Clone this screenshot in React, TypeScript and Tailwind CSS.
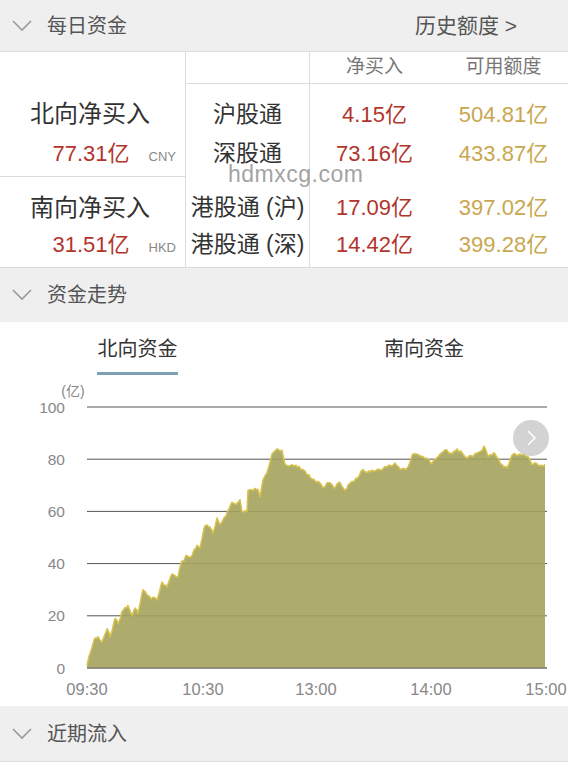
import React from 'react';

const FONT = '"Liberation Sans", "Noto Sans CJK SC", sans-serif';

// keypoints of the north-bound flow curve: [x px, value 亿]
const keys: [number, number][] = [
  [87, 1], [90, 5.4], [95, 11.5], [98, 12], [102, 10], [107, 15], [110, 12], [115, 19], [118, 17],
  [123, 22], [128, 24], [132, 20], [135, 23], [138, 21], [143, 30], [147, 28], [157, 26], [162, 33],
  [167, 31], [172, 36], [178, 35], [182, 41], [187, 43], [192, 43], [197, 47], [200, 46], [205, 54.5],
  [210, 54], [213, 51.5], [217, 57.5], [220, 55], [227, 59.5], [232, 63.5], [237, 63], [240, 64.5],
  [242, 60], [247, 60], [248, 68], [253, 68], [258, 68.5], [260, 65.5], [263, 72], [268, 76], [272, 82],
  [277, 84], [282, 83.5], [285, 78], [290, 77.5], [297, 77], [303, 76], [310, 73], [317, 71.5],
  [323, 69], [328, 71], [335, 69], [340, 71], [345, 68], [348, 70], [357, 72.5], [363, 76], [370, 75],
  [377, 76], [387, 77], [395, 78.5], [400, 76], [408, 77], [413, 82], [423, 81], [432, 78.5],
  [437, 80.5], [447, 83.5], [452, 82], [457, 84], [465, 81], [473, 81], [480, 83], [484, 85],
  [488, 81], [495, 82], [500, 78.5], [507, 76.5], [512, 81.5], [520, 82], [528, 81], [533, 78],
  [545, 78],
];

const yOf = (v: number) => 286 - v * 2.61;

function buildLine() {
  const pts: string[] = [];
  for (let i = 0; i < keys.length - 1; i++) {
    const [x0, v0] = keys[i];
    const [x1, v1] = keys[i + 1];
    for (let x = x0; x < x1; x += 2) {
      const t = (x - x0) / (x1 - x0);
      const r = Math.sin(x * 12.9898) * 43758.5453;
      const n = x === x0 ? 0 : (r - Math.floor(r) - 0.5) * 1.4;
      pts.push(`${x},${yOf(v0 + (v1 - v0) * t + n).toFixed(1)}`);
    }
  }
  const last = keys[keys.length - 1];
  pts.push(`${last[0]},${yOf(last[1]).toFixed(1)}`);
  return pts;
}

const Chevron = () => (
  <svg width="20" height="12" viewBox="0 0 20 12" className="shrink-0">
    <path d="M1 1 L10 10 L19 1" fill="none" stroke="#9a9a9a" strokeWidth="1.6" />
  </svg>
);

const SectionHeader = ({ title, right, h }: { title: string; right?: string; h: string }) => (
  <div className={`flex items-center justify-between bg-[#efefef] pl-[12px] pr-[51px] ${h}`}>
    <div className="flex items-center gap-[15px]">
      <Chevron />
      <span className="text-[20px] text-[#555]">{title}</span>
    </div>
    {right && <span className="text-[21px] text-[#555]">{right}</span>}
  </div>
);

const Chart = () => {
  const line = buildLine();
  const area = `M87,286 L${line.join(' L')} L545,286 Z`;
  const grid = [100, 80, 60, 40, 20, 0];
  const times: [string, number][] = [['09:30', 87], ['10:30', 203], ['13:00', 316], ['14:00', 431], ['15:00', 546]];
  return (
    <svg width="568" height="324" viewBox="0 0 568 324" style={{ fontFamily: FONT }}>
      <text x="73" y="14" fontSize="14" fill="#888" textAnchor="middle">(亿)</text>
      {grid.map((v) => (
        <g key={v}>
          <line x1="87" x2="547" y1={yOf(v)} y2={yOf(v)} stroke="#555" strokeWidth="1" />
          <text x="65" y={yOf(v) + 5.5} fontSize="15.5" fill="#888" textAnchor="end">{v}</text>
        </g>
      ))}
      <path d={area} fill="#a4a35d" fillOpacity="0.9" />
      <polyline points={line.join(' ')} fill="none" stroke="#d8c24c" strokeWidth="1.5" strokeLinejoin="round" />
      <line x1="87" x2="547" y1="286" y2="286" stroke="#777" strokeWidth="1" />
      {times.map(([t, x]) => (
        <text key={t} x={x} y="313" fontSize="16.5" fill="#888" textAnchor="middle">{t}</text>
      ))}
      <circle cx="531" cy="56" r="18" fill="#c8c8c8" fillOpacity="0.8" />
      <path d="M528 49 L535 56 L528 63" fill="none" stroke="#fff" strokeWidth="1.5" />
    </svg>
  );
};

const red = 'text-[#b2352c]';
const gold = 'text-[#c9a74f]';

export default function App() {
  return (
    <div className="relative w-[568px] h-[764px] overflow-hidden bg-white" style={{ fontFamily: FONT }}>
      <SectionHeader title="每日资金" right="历史额度 >" h="h-[51px]" />

      <div className="grid grid-cols-[186px_124px_129px_1fr] grid-rows-[32px_93px_90px] border-t border-b border-[#dcdcdc]">
        <div className="row-span-2 flex flex-col items-center pt-[42px] leading-[40px] border-r border-b border-[#dcdcdc]">
          <span className="text-[24px] text-[#333] pr-[5px]">北向净买入</span>
          <div className="self-end flex items-baseline gap-[19px] pr-[9px]">
            <span className={`text-[22px] ${red}`}>77.31亿</span>
            <span className="text-[13px] text-[#888]">CNY</span>
          </div>
        </div>
        <div className="border-r border-b border-[#dcdcdc]" />
        <div className="col-span-2 grid grid-cols-[129px_1fr] items-center border-b border-[#dcdcdc] text-[19px] text-[#777]">
          <span className="text-center">净买入</span>
          <span className="text-center">可用额度</span>
        </div>

        <div className="flex flex-col items-center pt-[11px] leading-[39px] border-r border-[#dcdcdc] text-[23px] text-[#333]">
          <span>沪股通</span>
          <span>深股通</span>
        </div>
        <div className={`flex flex-col items-center pt-[11px] leading-[39px] text-[22px] ${red}`}>
          <span>4.15亿</span>
          <span>73.16亿</span>
        </div>
        <div className={`flex flex-col items-center pt-[11px] leading-[39px] text-[22px] ${gold}`}>
          <span>504.81亿</span>
          <span>433.87亿</span>
        </div>

        <div className="flex flex-col items-center pt-[12px] leading-[37px] border-r border-[#dcdcdc]">
          <span className="text-[24px] text-[#333] pr-[5px]">南向净买入</span>
          <div className="self-end flex items-baseline gap-[19px] pr-[9px]">
            <span className={`text-[22px] ${red}`}>31.51亿</span>
            <span className="text-[13px] text-[#888]">HKD</span>
          </div>
        </div>
        <div className="flex flex-col items-center pt-[12px] leading-[37px] border-r border-[#dcdcdc] text-[23px] text-[#333]">
          <span>港股通 (沪)</span>
          <span>港股通 (深)</span>
        </div>
        <div className={`flex flex-col items-center pt-[12px] leading-[37px] text-[22px] ${red}`}>
          <span>17.09亿</span>
          <span>14.42亿</span>
        </div>
        <div className={`flex flex-col items-center pt-[12px] leading-[37px] text-[22px] ${gold}`}>
          <span>397.02亿</span>
          <span>399.28亿</span>
        </div>
      </div>

      <SectionHeader title="资金走势" h="h-[54px]" />

      <div className="grid grid-cols-2 h-[60px]">
        <div className="flex flex-col items-center pt-[13px] pr-[9px]">
          <span className="text-[20px] leading-[28px] text-[#333]">北向资金</span>
          <div className="mt-[9px] h-[3px] w-[81px] bg-[#7ba1b2]" />
        </div>
        <div className="flex flex-col items-center pt-[13px] pr-[4px]">
          <span className="text-[20px] leading-[28px] text-[#333]">南向资金</span>
        </div>
      </div>

      <Chart />

      <div className="border-b border-[#dcdcdc]">
        <SectionHeader title="近期流入" h="h-[55px]" />
      </div>

      <div className="absolute left-[228px] top-[157px] text-[23px] text-[#8a8a8a]/80 tracking-[0.5px]">hdmxcg.com</div>
    </div>
  );
}
